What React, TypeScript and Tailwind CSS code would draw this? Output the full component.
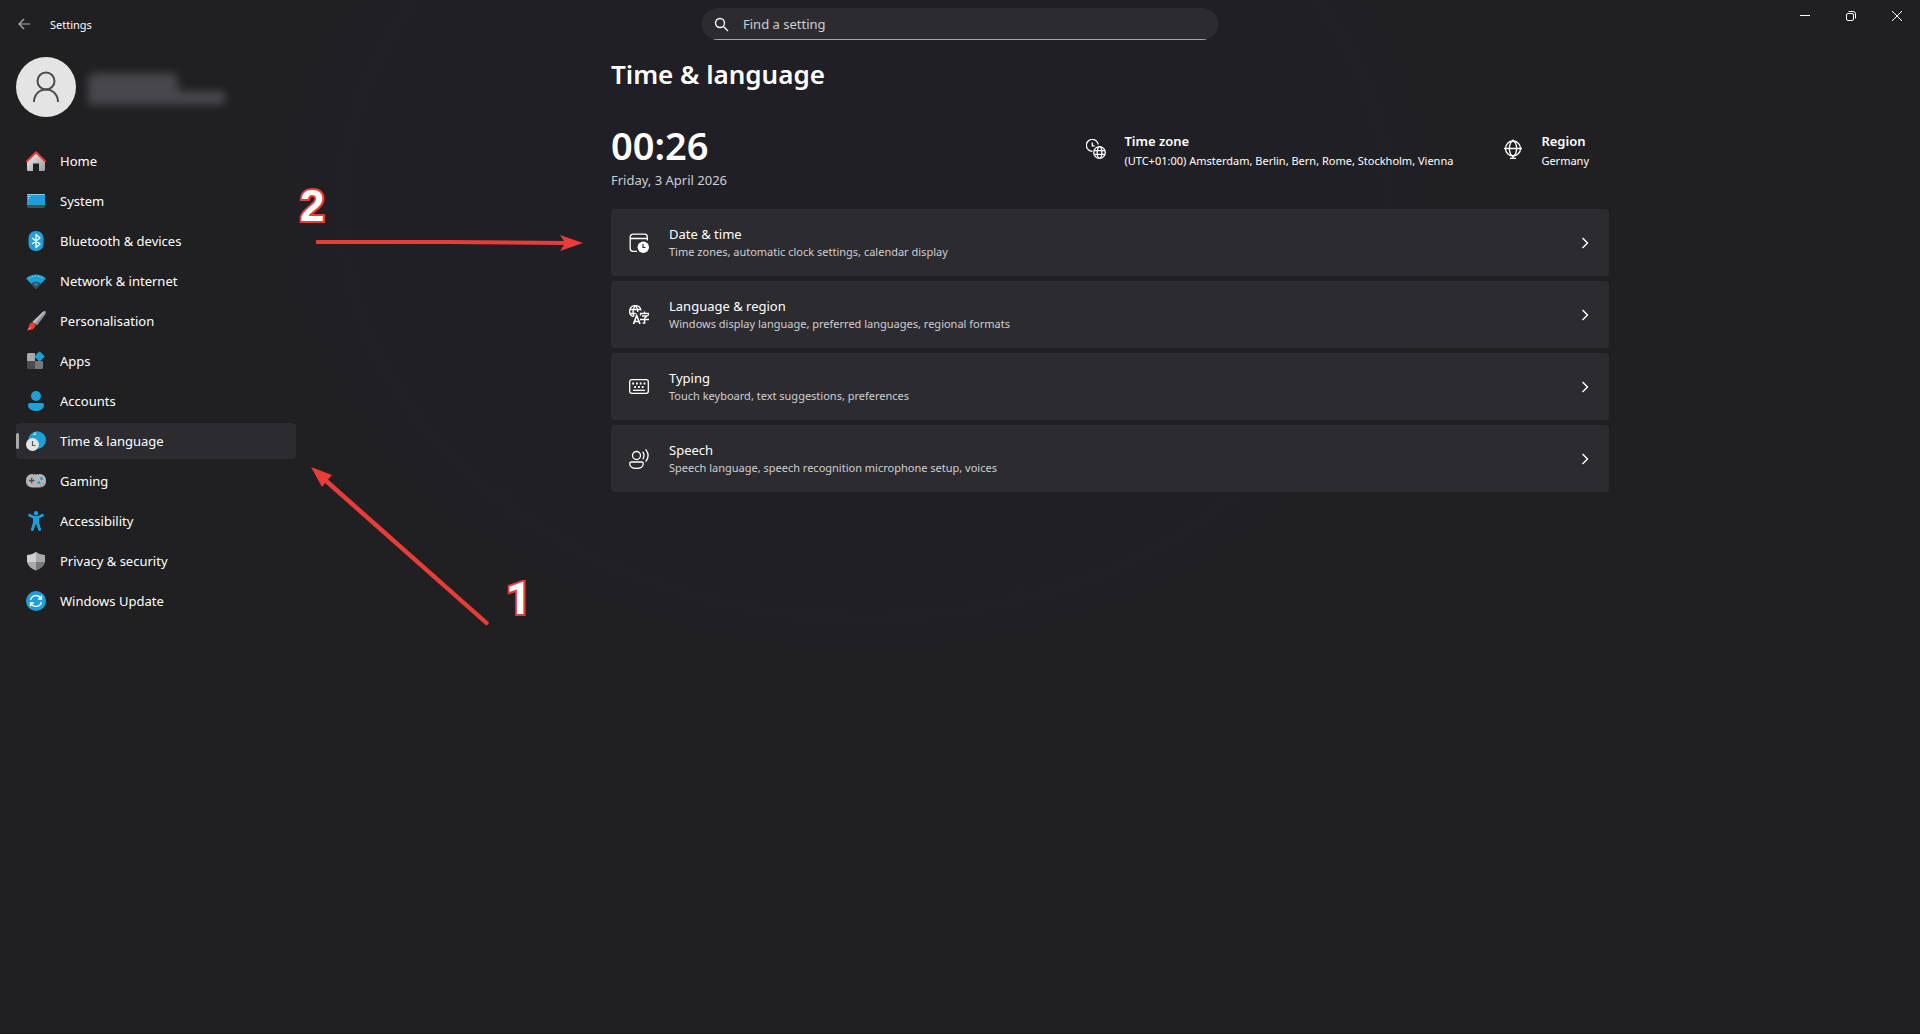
import * as React from "react";

const HomeIcon = () => (
  <svg width="20" height="20" viewBox="0 0 20 20">
    <defs>
      <linearGradient id="home" x1="0" y1="0" x2="1" y2="1">
        <stop offset="0" stopColor="#f0f0f0" />
        <stop offset="1" stopColor="#9a9a9c" />
      </linearGradient>
    </defs>
    <path d="M1 10 10 2l9 8v8.500a1.500 1.500 0 0 1-1.500 1.500H13v-7.500H7V20H2.500A1.500 1.500 0 0 1 1 18.500z" fill="url(#home)" />
    <path d="M1 10.200 10 1.200l9 9" fill="none" stroke="#e83c38" strokeWidth="2" strokeLinecap="round" strokeLinejoin="round" />
  </svg>
);

const SystemIcon = () => (
  <svg width="20" height="20" viewBox="0 0 20 20">
    <path d="M1 3h18v11H1z" fill="#1f9fd8" />
    <path d="M1 3h18v1H1z" fill="#8cc6e4" />
    <path d="M1 14h18v1.500a1.500 1.500 0 0 1-1.500 1.500h-15A1.500 1.500 0 0 1 1 15.500z" fill="#4b4b50" />
    <path d="M2 5.500h2M2 7.500h1" stroke="#bfe4f5" strokeWidth="1" />
  </svg>
);

const BluetoothIcon = () => (
  <svg width="20" height="20" viewBox="0 0 20 20">
    <rect x="2.500" y="0" width="15" height="20" rx="7" fill="#1f9fd8" />
    <path d="m6 7 8 6-4 3.500v-13L14 7l-8 6" fill="none" stroke="#fff" strokeWidth="1.300" strokeLinejoin="round" />
  </svg>
);

const NetworkIcon = () => (
  <svg width="20" height="20" viewBox="0 0 20 20">
    <path d="M0 7.500C5.500 2 14.500 2 20 7.500L10 18z" fill="#1f9fd8" />
    <path d="M5.200 12.600c2.800-2.400 6.800-2.400 9.600 0L10 18z" fill="#3d4a55" />
    <path d="M7.500 12.500c1.600-.800 3.400-.800 5 0L10 15.500z" fill="#2784ae" />
    <path d="M3 7.300c4.200-3.100 9.800-3.100 14 0" fill="none" stroke="#bfe4f5" strokeWidth="1" strokeDasharray="1 2.200" />
  </svg>
);

const BrushIcon = () => (
  <svg width="20" height="20" viewBox="0 0 20 20">
    <path d="M19.500.500c.700.700.500 1.800-.200 2.900L11 14.500 6.500 10.800 16.500 1.300c1-.900 2.300-1.500 3-.800z" fill="#8e8e92" />
    <path d="m6.500 10.800 10-9.500c1-.900 2.300-1.500 3-.800L8.800 12.700z" fill="#b9b9bc" />
    <path d="M5.500 11.500c2.500-.500 4.500 1.500 3.700 4-.800 2.700-4.700 4.300-8.700 3.700 1.700-1 2-2 2.300-3.700.300-2 1-3.600 2.700-4z" fill="#e83c38" />
    <path d="m2.500 18 2.500-1.500" stroke="#f3a5a2" strokeWidth="1" />
  </svg>
);

const AppsIcon = () => (
  <svg width="20" height="20" viewBox="0 0 20 20">
    <path d="M1 3.500A1.500 1.500 0 0 1 2.500 2H9v8H1z" fill="#a9a9ac" />
    <path d="M1 10h8v8H2.500A1.500 1.500 0 0 1 1 16.500z" fill="#4b4b50" />
    <path d="M9 10h8v6.500a1.500 1.500 0 0 1-1.500 1.500H9z" fill="#77777b" />
    <path d="m13.500.800 4.700 4.700-4.700 4.700-4.700-4.700z" fill="#1f9fd8" stroke="#1f9fd8" strokeLinejoin="round" />
  </svg>
);

const AccountsIcon = () => (
  <svg width="20" height="20" viewBox="0 0 20 20">
    <circle cx="10" cy="5" r="5" fill="#1f9fd8" />
    <path d="M2 14a2 2 0 0 1 2-2h12a2 2 0 0 1 2 2c0 3.600-3.300 6-8 6s-8-2.400-8-6z" fill="#1f9fd8" />
  </svg>
);

const TimeIcon = () => (
  <svg width="20" height="20" viewBox="0 0 20 20">
    <circle cx="11.200" cy="9" r="8.800" fill="#1f9fd8" />
    <path d="M7 3.500h3M8 2h2" stroke="#bfe4f5" strokeWidth="1" />
    <circle cx="6.500" cy="13.500" r="6.500" fill="#e4e4e4" />
    <path d="M6.500 10v4.500h3" fill="none" stroke="#5a5a5e" strokeWidth="1.200" />
  </svg>
);

const GamingIcon = () => (
  <svg width="20" height="20" viewBox="0 0 20 20">
    <rect x="0" y="3" width="20" height="13.500" rx="6" fill="#b4b4b7" />
    <path d="M3 9.500h5.500M5.700 6.700v5.600" stroke="#4b4b50" strokeWidth="1.300" />
    <path d="M7 3.500h6" stroke="#5a5a5e" strokeWidth="1" strokeDasharray="1.500 1" />
    <circle cx="15.500" cy="7.500" r="1.600" fill="#1f9fd8" />
    <circle cx="13" cy="11.500" r="1.600" fill="#1f9fd8" />
    <path d="M14 15h1.500M16.500 13h1.500" stroke="#77777b" strokeWidth="1" />
  </svg>
);

const AccessibilityIcon = () => (
  <svg width="20" height="20" viewBox="0 0 20 20">
    <circle cx="10" cy="2.200" r="2.200" fill="#1f9fd8" />
    <path d="M2.300 3.600c.400-.800 1.200-1 2-.600L8 5h4l3.700-2c.800-.400 1.600-.200 2 .600.400.800 0 1.500-.700 1.900l-4 2.100v4l2 6.500c.200.800-.200 1.600-1 1.800-.700.200-1.400-.100-1.700-.900L10.500 13.500h-1L7.700 19c-.300.800-1 1.100-1.700.9-.800-.200-1.200-1-1-1.800l2-6.500v-4L3 5.500c-.700-.4-1.100-1.100-.7-1.900z" fill="#1f9fd8" />
  </svg>
);

const ShieldIcon = () => (
  <svg width="20" height="20" viewBox="0 0 20 20">
    <path d="M10 1c2.500 2 5.500 3 9 3v5c0 4.500-3 8-9 10.500C4 17 1 13.500 1 9V4c3.500 0 6.500-1 9-3z" fill="#8b8b8f" />
    <path d="M10 1v10H1.200C1 10.400 1 9.700 1 9V4c3.500 0 6.500-1 9-3z" fill="#d0d0d2" />
    <path d="M10 1c2.500 2 5.500 3 9 3v5c0 .7-.1 1.400-.2 2H10zM10 11v8.500C5 17.500 2 14.700 1.200 11z" fill="#a9a9ac" />
    <path d="M10 11h8.800c-.800 3.700-3.800 6.500-8.800 8.500z" fill="#77777b" />
  </svg>
);

const UpdateIcon = () => (
  <svg width="20" height="20" viewBox="0 0 20 20">
    <circle cx="10" cy="10" r="10" fill="#1f9fd8" />
    <g fill="none" stroke="#fff" strokeWidth="1.300">
      <path d="M4.500 9A5.700 5.700 0 0 1 15 7.500M15.500 4.500v3.500H12" />
      <path d="M15.500 11A5.700 5.700 0 0 1 5 12.500M4.500 15.500V12H8" />
    </g>
  </svg>
);

const ClockGlobeIcon = () => (
  <svg width="20" height="20" viewBox="0 0 20 20" fill="none" stroke="#fff" strokeWidth="1.300">
    <path d="M6.500 12.400A6 6 0 1 1 12.300 5.500" />
    <path d="M6.300 3.500v3.300h2.500" />
    <circle cx="13.500" cy="13.500" r="5.800" />
    <ellipse cx="13.500" cy="13.500" rx="2.300" ry="5.800" />
    <path d="M8 11.700h11M8 15.400h11" />
  </svg>
);

const GlobeStandIcon = () => (
  <svg width="20" height="20" viewBox="0 0 20 20" fill="none" stroke="#fff" strokeWidth="1.300">
    <circle cx="10" cy="9.500" r="7.500" />
    <ellipse cx="10" cy="9.500" rx="3.600" ry="7.500" />
    <path d="M1 9.500h18M10 .500V2M10 17v2M7 19.300h6" />
  </svg>
);

const DateIcon = () => (
  <svg width="20" height="20" viewBox="0 0 20 20">
    <path d="M8 18.300H4A2.800 2.800 0 0 1 1.200 15.500V4A2.800 2.800 0 0 1 4 1.200h11.500A2.800 2.800 0 0 1 18.300 4v3.500M1.200 5.500h17.100" fill="none" stroke="#fff" strokeWidth="1.300" />
    <circle cx="14.300" cy="14.300" r="5.700" fill="#fff" />
    <path d="M14 11v3.500h2.500" fill="none" stroke="#2b2b2f" strokeWidth="1.200" />
  </svg>
);

const LanguageIcon = () => (
  <svg width="20" height="20" viewBox="0 0 20 20" fill="none" stroke="#fff" strokeWidth="1.300">
    <path d="M4.500 11.700A5.700 5.700 0 1 1 12 5.500M.800 4.500h11M.800 8.500h6" />
    <path d="M5 11.500C3.300 8 4 3 6.300.800 7.800 2 8.700 4 8.700 7" />
    <path d="m4.500 19 3.200-8.500L11 19M5.500 16.500h4.500" strokeWidth="1.600" />
    <path d="M15.500 6.500v2M11.500 10.500v-2h8v2M13 11h5l-2.300 2v5h-2M11 14.500h9" />
  </svg>
);

const KeyboardIcon = () => (
  <svg width="20" height="20" viewBox="0 0 20 20" fill="none" stroke="#fff">
    <rect x=".700" y="2.700" width="18.600" height="13.600" rx="2" strokeWidth="1.300" />
    <path d="M3.200 6.500H17" strokeWidth="1.800" strokeDasharray="1.800 2" />
    <path d="M5.200 10H15.500" strokeWidth="1.800" strokeDasharray="1.800 2" />
    <path d="M4 13.300h12" strokeWidth="1.300" />
  </svg>
);

const SpeechIcon = () => (
  <svg width="20" height="20" viewBox="0 0 20 20" fill="none" stroke="#fff" strokeWidth="1.300" strokeLinecap="round">
    <circle cx="7.500" cy="6.500" r="4" />
    <path d="M.700 14.800c0-1 .700-1.800 1.800-1.800h10c1.100 0 1.800.800 1.800 1.800 0 2.700-2.800 4.600-6.800 4.600s-6.800-1.900-6.800-4.600z" />
    <path d="M14 3.200c1.200 2 1.200 4.600 0 6.600M17 .800c2.500 3.400 2.500 8 0 11.400" />
  </svg>
);

const navItems = [
  { label: "Home", icon: HomeIcon },
  { label: "System", icon: SystemIcon },
  { label: "Bluetooth & devices", icon: BluetoothIcon },
  { label: "Network & internet", icon: NetworkIcon },
  { label: "Personalisation", icon: BrushIcon },
  { label: "Apps", icon: AppsIcon },
  { label: "Accounts", icon: AccountsIcon },
  { label: "Time & language", icon: TimeIcon, active: true },
  { label: "Gaming", icon: GamingIcon },
  { label: "Accessibility", icon: AccessibilityIcon },
  { label: "Privacy & security", icon: ShieldIcon },
  { label: "Windows Update", icon: UpdateIcon },
];

const cards = [
  { title: "Date & time", text: "Time zones, automatic clock settings, calendar display", icon: DateIcon },
  { title: "Language & region", text: "Windows display language, preferred languages, regional formats", icon: LanguageIcon },
  { title: "Typing", text: "Touch keyboard, text suggestions, preferences", icon: KeyboardIcon },
  { title: "Speech", text: "Speech language, speech recognition microphone setup, voices", icon: SpeechIcon },
];

function TitleBar() {
  return (
    <header className="grid grid-cols-[1fr_516px_1fr] h-12">
      <div className="flex items-center">
        <button aria-label="Back" className="w-12 h-12 flex items-center justify-center">
          <svg width="12" height="12" viewBox="0 0 12 12" fill="none" stroke="#b0b0b3" strokeWidth="1.200">
            <path d="M12 6H1M6 1 1 6l5 5" />
          </svg>
        </button>
        <span className="text-[11px] pl-0.5 pt-0.5">Settings</span>
      </div>
      <label className="mt-2 h-8 px-3 flex items-center gap-3.5 rounded-full bg-[linear-gradient(to_top,#a5a5a8_1px,#2c2b30_1px)]">
        <svg width="15" height="15" viewBox="0 0 15 15" fill="none" stroke="#fff" strokeWidth="1.300">
          <circle cx="6" cy="6" r="4.500" />
          <path d="m9.200 9.200 4.800 4.800" />
        </svg>
        <input
          type="text"
          aria-label="Find a setting"
          placeholder="Find a setting"
          className="flex-1 pt-px bg-transparent text-[13px] outline-none placeholder:text-[#cfcfd1]"
        />
      </label>
      <div className="flex justify-end">
        <button aria-label="Minimise" className="w-[46px] h-8 flex items-center justify-center">
          <svg width="10" height="10" viewBox="0 0 10 10" stroke="#fff"><path d="M0 4.500h10" /></svg>
        </button>
        <button aria-label="Restore" className="w-[46px] h-8 flex items-center justify-center">
          <svg width="10" height="10" viewBox="0 0 10 10" fill="none" stroke="#fff">
            <rect x=".500" y="2.500" width="7" height="7" rx="1.500" />
            <path d="M2.500.500H7A2.500 2.500 0 0 1 9.500 3v4.500" />
          </svg>
        </button>
        <button aria-label="Close" className="w-[46px] h-8 flex items-center justify-center">
          <svg width="10" height="10" viewBox="0 0 10 10" stroke="#fff"><path d="m0 0 10 10M10 0 0 10" /></svg>
        </button>
      </div>
    </header>
  );
}

function Sidebar() {
  return (
    <aside className="w-[300px] shrink-0 pl-4 pr-1 pt-[9px]">
      <div className="flex items-center gap-3">
        <div className="w-15 h-15 rounded-full bg-[#e4e4e4] flex items-center justify-center">
          <svg width="28" height="32" viewBox="0 0 28 32" fill="none" stroke="#4b4b50" strokeWidth="2">
            <circle cx="14" cy="10" r="8.500" />
            <path d="M2 31c0-7 5-12.500 12-12.500S26 24 26 31" />
          </svg>
        </div>
        <div className="flex flex-col pt-1 blur-[4px]">
          <div className="w-[90px] h-[18px] rounded-t-lg bg-[#48474c]" />
          <div className="w-[138px] h-3.5 rounded-r-full rounded-bl-lg bg-[#48474c]" />
        </div>
      </div>
      <nav className="flex flex-col gap-1 mt-[26px]">
        {navItems.map(({ label, icon: Icon, active }) => (
          <a
            key={label}
            href="#"
            className={`h-9 flex items-center rounded text-[13px] ${active ? "bg-[#2c2b30]" : ""}`}
          >
            <span className={`w-[3px] h-4 rounded-full mr-[7px] ${active ? "bg-[#a9a9ac]" : ""}`} />
            <Icon />
            <span className="ml-3.5 pt-0.5">{label}</span>
          </a>
        ))}
      </nav>
    </aside>
  );
}

function Main() {
  return (
    <main className="flex-1">
      <div className="max-w-[998px] mx-auto">
        <h1 className="text-[26px] leading-9 font-semibold mt-2">Time &amp; language</h1>
        <div className="flex justify-between mt-7">
          <div>
            <p className="text-[38px] leading-[50px] font-semibold">00:26</p>
            <p className="text-[13px] leading-5 text-[#cfcfd1]">Friday, 3 April 2026</p>
          </div>
          <div className="flex gap-[50px] pt-[11px] pr-5">
            <div className="flex gap-[18px]">
              <div className="pt-2"><ClockGlobeIcon /></div>
              <div>
                <p className="text-[13px] leading-5 font-semibold">Time zone</p>
                <p className="text-[11px] leading-5">(UTC+01:00) Amsterdam, Berlin, Bern, Rome, Stockholm, Vienna</p>
              </div>
            </div>
            <div className="flex gap-[18px]">
              <div className="pt-2"><GlobeStandIcon /></div>
              <div>
                <p className="text-[13px] leading-5 font-semibold">Region</p>
                <p className="text-[11px] leading-5">Germany</p>
              </div>
            </div>
          </div>
        </div>
        <div className="flex flex-col gap-[5px] mt-[19px]">
          {cards.map(({ title, text, icon: Icon }) => (
            <button key={title} className="h-[67px] pl-[18px] pr-5 flex items-center text-left rounded bg-[#2c2b30]">
              <Icon />
              <span className="flex-1 flex flex-col ml-5 pt-px">
                <span className="text-[13px] leading-[18px]">{title}</span>
                <span className="text-[11px] leading-[18px] text-[#cfcfd1]">{text}</span>
              </span>
              <svg width="8" height="12" viewBox="0 0 8 12" fill="none" stroke="#fff" strokeWidth="1.400">
                <path d="m1.500 1 5 5-5 5" />
              </svg>
            </button>
          ))}
        </div>
      </div>
    </main>
  );
}

// numbered steps drawn over the window
function Steps() {
  return (
    <div className="absolute inset-0 pointer-events-none overflow-hidden">
      <svg className="absolute left-0 top-0" width="600" height="640" viewBox="0 0 600 640" fill="#e83c38">
        <path d="M316 240h132l116 1-4-6 23 8-23 8 4-6-116-1H316z" />
        <path d="m311 467 21 8-4 4.500 160 142a2 2 0 0 1-3 3l-160-141.500-3 4z" />
      </svg>
      <span className="absolute left-[300px] top-[181px] font-['Liberation_Sans',Arial,sans-serif] font-bold text-[44px] leading-[50px] [-webkit-text-stroke:4px_#e83c38] [paint-order:stroke_fill]">
        2
      </span>
      <span className="absolute left-[506px] top-[574px] font-[Roboto,Arial,sans-serif] font-bold text-[44px] leading-[50px] [-webkit-text-stroke:4px_#e83c38] [paint-order:stroke_fill]">
        1
      </span>
    </div>
  );
}

export default function App() {
  return (
    <div className="relative min-h-screen flex flex-col border-b border-[#1a181b] bg-[#202022] bg-[radial-gradient(ellipse_at_45%_20%,#211f26_0%,#211f26_25%,#202022_45%)] text-white font-['Noto_Sans','Open_Sans',sans-serif]">
      <TitleBar />
      <div className="flex flex-1">
        <Sidebar />
        <Main />
      </div>
      <Steps />
    </div>
  );
}
